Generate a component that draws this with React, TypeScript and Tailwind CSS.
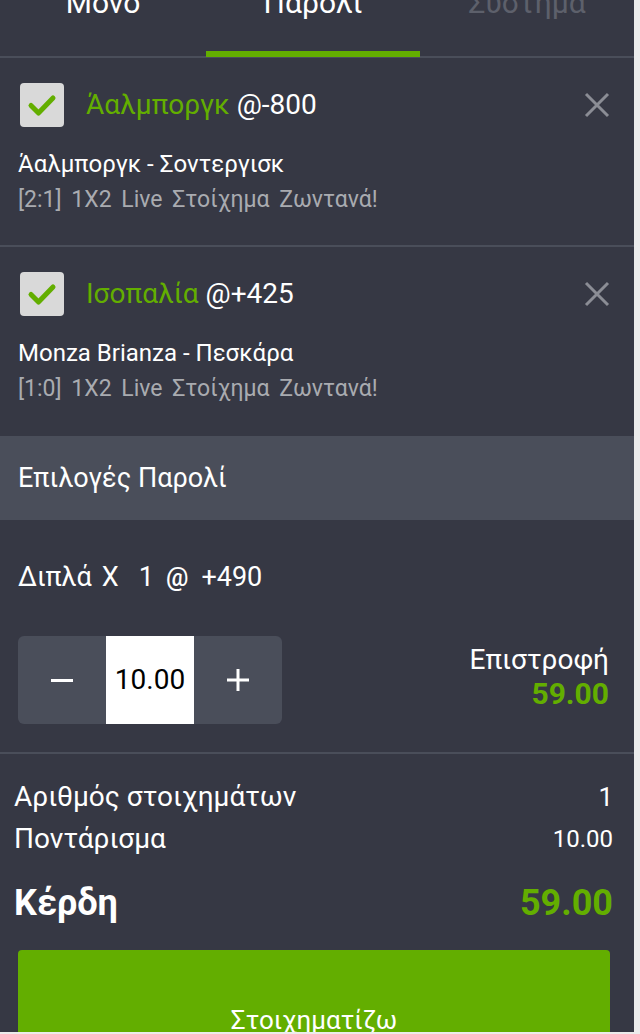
import React from "react";

const font = { fontFamily: "Roboto, 'Noto Sans', sans-serif" };

const Check = () => (
  <div className="w-[44px] h-[44px] rounded-[4px] bg-[#d9d9d9] flex items-center justify-center shrink-0">
    <svg width="30" height="24" viewBox="0 0 30 24">
      <path d="M4 12.5 L11.5 20 L26 5" fill="none" stroke="#63ae00" strokeWidth="5" strokeLinecap="round" strokeLinejoin="round" />
    </svg>
  </div>
);

const Close = () => (
  <svg width="26" height="26" viewBox="0 0 26 26" className="shrink-0">
    <path d="M2 2 L24 24 M24 2 L2 24" stroke="#8b8d95" strokeWidth="3" />
  </svg>
);

type Bet = { pick: string; odds: string; match: string; market: string };

const bets: Bet[] = [
  { pick: "Άαλμποργκ", odds: "-800", match: "Άαλμποργκ - Σοντεργισκ", market: "[2:1] 1X2 Live Στοίχημα Ζωντανά!" },
  { pick: "Ισοπαλία", odds: "+425", match: "Monza Brianza - Πεσκάρα", market: "[1:0] 1X2 Live Στοίχημα Ζωντανά!" },
];

const BetRow = ({ bet, last }: { bet: Bet; last?: boolean }) => (
  <div className={`h-[189px] shrink-0 pt-[25px] pl-[20px] pr-[24px] ${last ? "" : "border-b-2 border-[#4a4e5a]"}`}>
    <div className="flex items-center h-[44px]">
      <Check />
      <div className="ml-[22px] text-[28px] leading-none">
        <span className="text-[#63ae00]">{bet.pick}</span>
        <span className="text-white"> @{bet.odds}</span>
      </div>
      <div className="ml-auto">
        <Close />
      </div>
    </div>
    <div className="mt-[19px] -ml-[2px] text-[24px] leading-[36px] text-white">{bet.match}</div>
    <div className="-ml-[2px] text-[23px] leading-[36px] text-[#a9abb0] [word-spacing:4px]">{bet.market}</div>
  </div>
);

export default function App() {
  return (
    <div className="w-[640px] h-[1034px] overflow-hidden bg-[#ececec] flex" style={font}>
      <div className="w-[634px] h-[1032px] bg-[#363844] flex flex-col overflow-hidden">
        {/* tabs */}
        <div className="relative h-[58px] flex border-b-2 border-[#4a4e5a] shrink-0">
          <div className="w-[206px] text-center text-white text-[30px] leading-none -mt-[12px]">Μονο</div>
          <div className="w-[214px] text-center text-white text-[30px] leading-none -mt-[12px]">Παρολί</div>
          <div className="w-[214px] text-center text-[#5d606b] text-[30px] leading-none -mt-[12px]">Συστημα</div>
          <div className="absolute left-[206px] bottom-[-1px] w-[214px] h-[6px] bg-[#63ae00]" />
        </div>

        {bets.map((b, i) => (
          <BetRow key={i} bet={b} last={i === bets.length - 1} />
        ))}

        <div className="h-[84px] shrink-0 bg-[#4a4e5a] flex items-center px-[18px] text-white text-[27px]">
          Επιλογές Παρολί
        </div>

        <div className="shrink-0 pt-[39px] pb-[28px] pl-[18px] pr-[25px] border-b-2 border-[#4a4e5a]">
          <div className="flex items-baseline h-[36px] text-white text-[27px] leading-[36px]">
            <span>Διπλά</span>
            <span className="ml-[10px]">Χ</span>
            <span className="ml-[20px]">1</span>
            <span className="ml-[12px] text-[25px] font-medium">@</span>
            <span className="ml-[13px]">+490</span>
          </div>
          <div className="mt-[41px] flex items-center justify-between">
            <div className="flex h-[88px] rounded-[6px] overflow-hidden bg-[#4a4e5a]">
              <div className="w-[88px] flex items-center justify-center">
                <div className="w-[22px] h-[3px] bg-white" />
              </div>
              <div className="w-[88px] bg-white flex items-center justify-center text-black text-[28px]">10.00</div>
              <div className="w-[88px] flex items-center justify-center">
                <svg width="24" height="24" viewBox="0 0 24 24">
                  <path d="M12 1 V23 M1 12 H23" stroke="white" strokeWidth="3" />
                </svg>
              </div>
            </div>
            <div className="text-right -mt-[6px]">
              <div className="text-white text-[28px] leading-[34px]">Επιστροφή</div>
              <div className="text-[#63ae00] text-[30px] font-bold leading-[34px]">59.00</div>
            </div>
          </div>
        </div>

        <div className="shrink-0 pl-[14px] pr-[21px] pt-[22px]">
          <div className="flex justify-between text-white text-[28px] leading-[42px]">
            <span>Αριθμός στοιχημάτων</span>
            <span className="text-[26px]">1</span>
          </div>
          <div className="flex justify-between text-white text-[28px] leading-[42px]">
            <span>Ποντάρισμα</span>
            <span className="text-[24px]">10.00</span>
          </div>
          <div className="mt-[21px] flex justify-between items-center leading-[44px]">
            <span className="text-white text-[36px] font-bold">Κέρδη</span>
            <span className="text-[#63ae00] text-[36px] font-bold">59.00</span>
          </div>
        </div>

        <div className="shrink-0 ml-[18px] mr-[24px] mt-[25px] h-[110px] bg-[#63ae00] rounded-[4px] flex items-end justify-center pb-[27px] text-white text-[26px] leading-none">
          Στοιχηματίζω
        </div>
      </div>
    </div>
  );
}
